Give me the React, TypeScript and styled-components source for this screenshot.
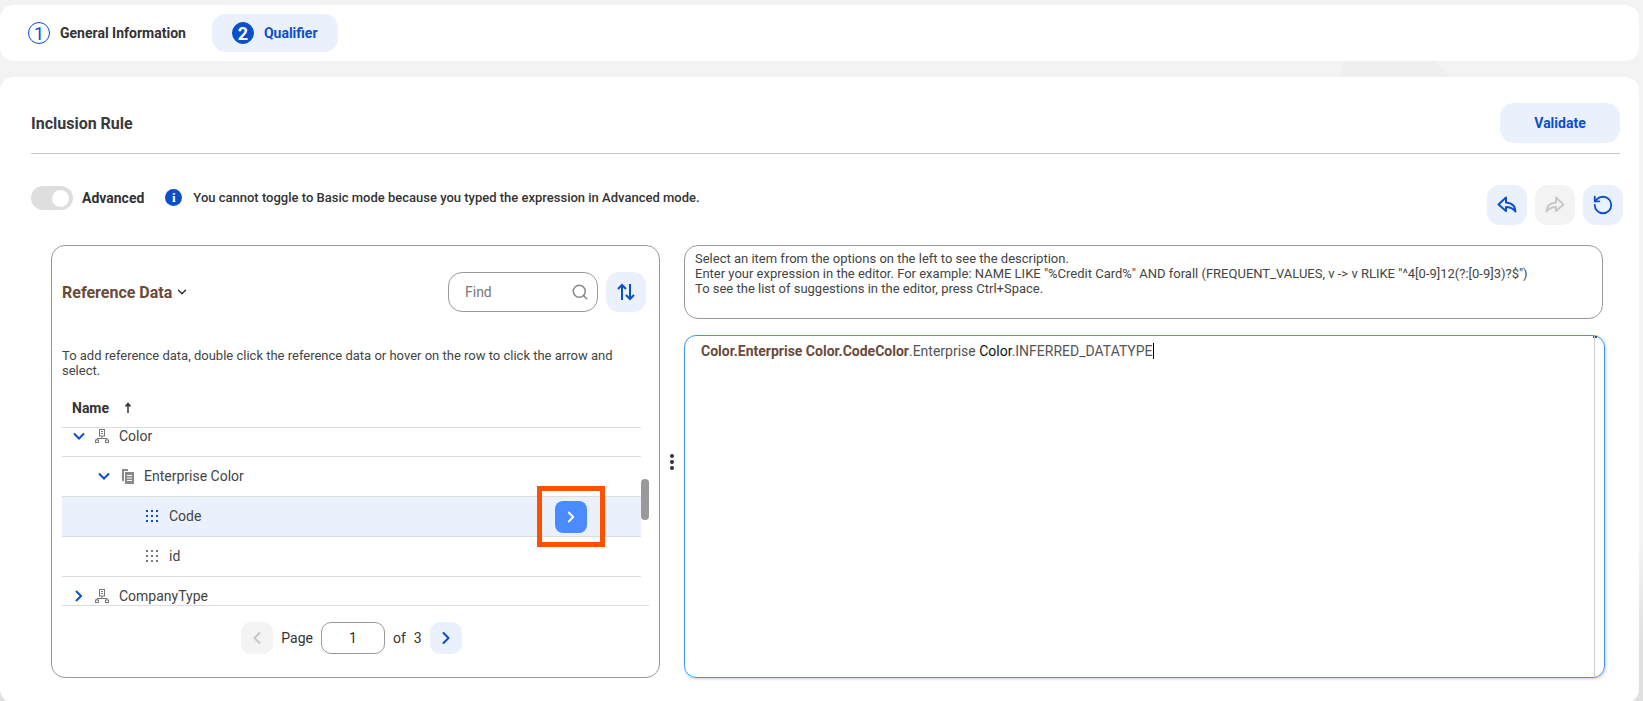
import styled, { createGlobalStyle } from 'styled-components';
import { ChevronDown, ChevronLeft, ChevronRight, RotateCcw, Search } from 'lucide-react';

const GlobalStyle = createGlobalStyle`
  html, body {
    margin: 0;
    height: 100%;
    overflow: hidden;
    background: #f3f3f3;
    font-family: Roboto, "Liberation Sans", sans-serif;
    color: #333;
  }
`;

const Page = styled.div`
  width: 1643px;
  height: 701px;
  padding: 5px 4px 0 0;
  box-sizing: border-box;
  display: flex;
  flex-direction: column;
  gap: 16px;
  position: relative;
  overflow: hidden;
  background: linear-gradient(#f3f3f3 78%, #e0e0e0 92%);

  &::before {
    content: '';
    position: absolute;
    left: 1340px;
    top: 50px;
    width: 112px;
    height: 30px;
    background: #efefef;
    clip-path: polygon(4% 0, 78% 0, 100% 100%, 0 100%);
  }
`;

const Stepper = styled.div`
  height: 56px;
  flex: none;
  display: flex;
  align-items: center;
  gap: 26px;
  padding-left: 28px;
  background: #fff;
  border-radius: 14px;
  position: relative;
`;

const Step = styled.div<{ $active?: boolean }>`
  height: 38px;
  display: flex;
  align-items: center;
  gap: 10px;
  padding: ${({ $active }) => ($active ? '0 20px' : '0')};
  border-radius: 14px;
  font-size: 14px;
  font-weight: 700;
  background: ${({ $active }) => ($active ? '#eaf1fd' : 'transparent')};
  color: ${({ $active }) => ($active ? '#0b4fc9' : '#333')};
`;

const StepNumber = styled.span<{ $active?: boolean }>`
  width: 22px;
  height: 22px;
  box-sizing: border-box;
  border-radius: 50%;
  display: flex;
  align-items: center;
  justify-content: center;
  font-size: 18px;
  font-weight: ${({ $active }) => ($active ? 700 : 400)};
  border: 1px solid #0b4fc9;
  color: ${({ $active }) => ($active ? '#fff' : '#0b4fc9')};
  background: ${({ $active }) => ($active ? '#0b4fc9' : '#fff')};
`;

const Main = styled.main`
  flex: none;
  height: 626px;
  background: #fff;
  border-radius: 14px;
  padding-left: 31px;
  display: flex;
  flex-direction: column;
  position: relative;
`;

const TitleRow = styled.div`
  height: 77px;
  width: 1589px;
  flex: none;
  box-sizing: border-box;
  padding-top: 26px;
  display: flex;
  justify-content: space-between;
  border-bottom: 1px solid #c8c8c8;
`;

const Title = styled.h2`
  margin: 0;
  font-size: 16px;
  line-height: 42px;
  font-weight: 700;
  color: #3a3a3a;
`;

const SoftButton = styled.button`
  width: 120px;
  height: 40px;
  border: 0;
  border-radius: 14px;
  background: #eaf1fd;
  color: #0b4fc9;
  font: 700 14px Roboto, sans-serif;
`;

const ToggleRow = styled.div`
  height: 91px;
  width: 1592px;
  flex: none;
  box-sizing: border-box;
  padding-top: 31px;
  display: flex;
  align-items: flex-start;
`;

const Toggle = styled.span`
  width: 42px;
  height: 24px;
  margin-top: 1px;
  border-radius: 12px;
  background: #dedede;
  display: flex;
  justify-content: flex-end;
  align-items: center;
  padding-right: 4px;
  box-sizing: border-box;

  &::after {
    content: '';
    width: 17px;
    height: 17px;
    border-radius: 50%;
    background: #fff;
  }
`;

const ToggleLabel = styled.span`
  margin: 1px 0 0 9px;
  font-size: 14px;
  line-height: 24px;
  font-weight: 700;
`;

const InfoDot = styled.span`
  width: 17px;
  height: 17px;
  margin: 4px 11px 0 21px;
  border-radius: 50%;
  background: #0b4fc9;
  color: #fff;
  font: 700 13px/17px "Liberation Serif", serif;
  text-align: center;
`;

const InfoText = styled.span`
  margin-top: 1px;
  font-size: 13px;
  line-height: 24px;
  font-weight: 500;
  flex: 1;
`;

const HistoryGroup = styled.div`
  display: flex;
  gap: 8px;
`;

const IconButton = styled.button<{ $disabled?: boolean; $size?: number }>`
  width: ${({ $size }) => $size ?? 40}px;
  height: ${({ $size }) => $size ?? 40}px;
  padding: 0;
  border: 0;
  flex: none;
  border-radius: ${({ $size }) => ($size ? 10 : 13)}px;
  display: flex;
  align-items: center;
  justify-content: center;
  background: ${({ $disabled }) => ($disabled ? '#f3f3f3' : '#eaf1fd')};
  color: ${({ $disabled }) => ($disabled ? '#c8c8c8' : '#0b4fc9')};
`;

const Workspace = styled.div`
  display: flex;
  align-items: flex-start;
  margin-left: 20px;
`;

const LeftPanel = styled.section`
  width: 609px;
  height: 433px;
  flex: none;
  box-sizing: border-box;
  border: 1px solid #999;
  border-radius: 14px;
  padding: 26px 0 0 10px;
  display: flex;
  flex-direction: column;
`;

const PanelHead = styled.div`
  display: flex;
  align-items: center;
  height: 40px;
  width: 584px;
  flex: none;
`;

const PanelTitle = styled.div`
  font-size: 16px;
  font-weight: 700;
  color: #6b4a3a;
  display: flex;
  align-items: center;
  gap: 3px;
  flex: 1;
`;

const FindBox = styled.div`
  width: 150px;
  height: 40px;
  box-sizing: border-box;
  margin-right: 8px;
  padding: 0 8px 0 16px;
  border: 1px solid #999;
  border-radius: 14px;
  display: flex;
  align-items: center;
  justify-content: space-between;
  font-size: 14px;
  color: #777;
`;

const Hint = styled.p`
  margin: 36px 20px 0 0;
  font-size: 13px;
  line-height: 15px;
  color: #444;
`;

const TableHead = styled.div`
  margin-top: 10px;
  width: 579px;
  height: 40px;
  flex: none;
  box-sizing: border-box;
  padding-left: 10px;
  display: flex;
  align-items: center;
  gap: 15px;
  font-size: 14px;
  font-weight: 700;
  border-bottom: 1px solid #ddd;
`;

const TreeBody = styled.div`
  width: 587px;
  height: 178px;
  flex: none;
  box-sizing: border-box;
  overflow: hidden;
  position: relative;
  border-bottom: 1px solid #ddd;
`;

const TreeRows = styled.div`
  margin-top: -11px;
  display: flex;
  flex-direction: column;
`;

const Row = styled.div<{ $indent: number; $selected?: boolean }>`
  width: 579px;
  flex: none;
  height: 40px;
  box-sizing: border-box;
  padding: 0 0 1px ${({ $indent }) => $indent}px;
  display: flex;
  align-items: center;
  gap: 10px;
  font-size: 14px;
  color: #444;
  border-bottom: 1px solid #ddd;
  background: ${({ $selected }) => ($selected ? '#eaf1fd' : 'transparent')};
  position: relative;
`;

const RowAction = styled.span`
  position: absolute;
  left: 493px;
  top: 4px;
  width: 32px;
  height: 32px;
  border-radius: 8px;
  background: #4a8cff;
  color: #fff;
  display: flex;
  align-items: center;
  justify-content: center;
`;

const Callout = styled.span`
  position: absolute;
  left: 475px;
  top: -11px;
  width: 68px;
  height: 61px;
  box-sizing: border-box;
  border: 5px solid #ff5000;
`;

const ScrollThumb = styled.span`
  position: absolute;
  right: 0;
  top: 51px;
  width: 8px;
  height: 41px;
  border-radius: 4px;
  background: #999;
`;

const Pager = styled.div`
  display: flex;
  align-items: center;
  justify-content: center;
  gap: 8px;
  margin-top: 16px;
  width: 579px;
  font-size: 14px;
  color: #333;
`;

const PageInput = styled.span`
  width: 64px;
  height: 32px;
  box-sizing: border-box;
  border: 1px solid #999;
  border-radius: 10px;
  display: flex;
  align-items: center;
  justify-content: center;
`;

const Divider = styled.div`
  width: 24px;
  flex: none;
  align-self: center;
  display: flex;
  flex-direction: column;
  align-items: center;
  gap: 2px;

  & > span {
    width: 4px;
    height: 4px;
    border-radius: 50%;
    background: #333;
  }
`;

const RightColumn = styled.div`
  width: 921px;
  flex: none;
  display: flex;
  flex-direction: column;
  gap: 16px;
`;

const Description = styled.div`
  width: 919px;
  height: 74px;
  box-sizing: border-box;
  border: 1px solid #999;
  border-radius: 14px;
  padding: 5px 10px;
  font-size: 13px;
  line-height: 15px;
  color: #444;
`;

const Editor = styled.div`
  height: 343px;
  box-sizing: border-box;
  border: 1.5px solid #3f95f0;
  border-radius: 12px;
  padding: 7px 16px;
  font-size: 14px;
  line-height: 16px;
  color: #555;
  position: relative;
  box-shadow: 1px 1px 3px rgba(0, 0, 0, 0.2);

  &::before {
    content: '';
    position: absolute;
    top: 0;
    right: 7px;
    width: 4px;
    height: 2px;
    background: #444;
  }

  &::after {
    content: '';
    position: absolute;
    top: 0;
    bottom: 0;
    right: 9px;
    border-right: 1px solid #d0d0d0;
  }
`;

const Token = styled.span`
  font-weight: 700;
  color: #6b4a3a;
`;

const Dark = styled.span`
  color: #111;
`;

const Caret = styled.span`
  display: inline-block;
  width: 1px;
  height: 16px;
  vertical-align: -3px;
  background: #000;
`;

const ReplyArrow = ({ flip }: { flip?: boolean }) => (
  <svg width="20" height="18" viewBox="0 0 20 18" fill="none" stroke="currentColor" strokeWidth="2" strokeLinejoin="round" style={flip ? { transform: 'scaleX(-1)' } : undefined}>
    <path d="M9 1.500 1.500 8.500 9 15v-4c3.500 0 6.500.8 9.500 4.500 0-5.500-4-8.500-9.500-9z" />
  </svg>
);

const TreeChevron = ({ open }: { open?: boolean }) => (
  <svg width="12" height="12" viewBox="0 0 12 12" fill="none" stroke="#0b4fc9" strokeWidth="2" strokeLinejoin="miter">
    <path d={open ? 'M1 3.500l5 5 5-5' : 'M3 1l5 5-5 5'} />
  </svg>
);

const EntityIcon = () => (
  <svg width="14" height="14" viewBox="0 0 14 14" fill="none" stroke="#777" strokeWidth="1">
    <rect x="4.500" y="0.500" width="5" height="6.500" />
    <path d="M6 2.500h2M6 4.500h2M7 7v2.500M2 11V9.500h10V11" />
    <rect x="0.500" y="11" width="3" height="2.500" />
    <rect x="10.500" y="11" width="3" height="2.500" />
  </svg>
);

const CopyIcon = () => (
  <svg width="14" height="15" viewBox="0 0 14 15">
    <path d="M2 0h6v2H4v10H2z" fill="#8a8a8a" />
    <path d="M5 3h9v12H5z" fill="#8a8a8a" />
    <path d="M7 6.500h5M7 9h5M7 11.500h5" stroke="#fff" strokeWidth="1" />
  </svg>
);

const GridDots = ({ fill }: { fill: string }) => (
  <svg width="13" height="12" viewBox="0 0 13 12" fill={fill}>
    {[0, 5, 10].map((y) =>
      [0, 5, 10].map((x) => <rect key={`${x}-${y}`} x={x} y={y} width="2" height="2" />),
    )}
  </svg>
);

const SwapIcon = () => (
  <svg width="18" height="18" viewBox="0 0 18 18" fill="none" stroke="currentColor" strokeWidth="2">
    <path d="M5 17V2M1 6l4-4 4 4M13 1v15M9 12l4 4 4-4" />
  </svg>
);

const SortArrow = () => (
  <svg width="8" height="11" viewBox="0 0 8 11" fill="none" stroke="#333" strokeWidth="1.500">
    <path d="M4 11V1.500M1.500 4.500 4 1.500l2.500 3" />
  </svg>
);

export default function App() {
  return (
    <Page>
      <GlobalStyle />
      <Stepper>
        <Step>
          <StepNumber>1</StepNumber>
          General Information
        </Step>
        <Step $active>
          <StepNumber $active>2</StepNumber>
          Qualifier
        </Step>
      </Stepper>
      <Main>
        <TitleRow>
          <Title>Inclusion Rule</Title>
          <SoftButton>Validate</SoftButton>
        </TitleRow>
        <ToggleRow>
          <Toggle />
          <ToggleLabel>Advanced</ToggleLabel>
          <InfoDot>i</InfoDot>
          <InfoText>You cannot toggle to Basic mode because you typed the expression in Advanced mode.</InfoText>
          <HistoryGroup>
            <IconButton>
              <ReplyArrow />
            </IconButton>
            <IconButton $disabled>
              <ReplyArrow flip />
            </IconButton>
            <IconButton>
              <RotateCcw size={22} strokeWidth={2} />
            </IconButton>
          </HistoryGroup>
        </ToggleRow>
        <Workspace>
          <LeftPanel>
            <PanelHead>
              <PanelTitle>
                Reference Data <ChevronDown size={14} strokeWidth={2.5} color="#333" />
              </PanelTitle>
              <FindBox>
                Find <Search size={18} color="#888" />
              </FindBox>
              <IconButton>
                <SwapIcon />
              </IconButton>
            </PanelHead>
            <Hint>To add reference data, double click the reference data or hover on the row to click the arrow and select.</Hint>
            <TableHead>
              Name <SortArrow />
            </TableHead>
            <TreeBody>
              <TreeRows>
                <Row $indent={11}>
                  <TreeChevron open />
                  <EntityIcon />
                  Color
                </Row>
                <Row $indent={36}>
                  <TreeChevron open />
                  <CopyIcon />
                  Enterprise Color
                </Row>
                <Row $indent={84} $selected>
                  <GridDots fill="#0b4fc9" />
                  Code
                  <RowAction>
                    <ChevronRight size={18} strokeWidth={2.5} />
                  </RowAction>
                  <Callout />
                </Row>
                <Row $indent={84}>
                  <GridDots fill="#777" />
                  id
                </Row>
                <Row $indent={11}>
                  <TreeChevron />
                  <EntityIcon />
                  CompanyType
                </Row>
              </TreeRows>
              <ScrollThumb />
            </TreeBody>
            <Pager>
              <IconButton $disabled $size={32}>
                <ChevronLeft size={20} strokeWidth={2.5} />
              </IconButton>
              <span>Page</span>
              <PageInput>1</PageInput>
              <span>of</span>
              <span>3</span>
              <IconButton $size={32}>
                <ChevronRight size={20} strokeWidth={2.5} />
              </IconButton>
            </Pager>
          </LeftPanel>
          <Divider>
            <span />
            <span />
            <span />
          </Divider>
          <RightColumn>
            <Description>
              Select an item from the options on the left to see the description.
              <br />
              Enter your expression in the editor. For example: NAME LIKE "%Credit Card%" AND forall (FREQUENT_VALUES, v -&gt; v RLIKE "^4[0-9]12(?:[0-9]3)?$")
              <br />
              To see the list of suggestions in the editor, press Ctrl+Space.
            </Description>
            <Editor>
              <Token>Color.Enterprise Color.CodeColor</Token>.Enterprise <Dark>Color</Dark>.INFERRED_DATATYPE
              <Caret />
            </Editor>
          </RightColumn>
        </Workspace>
      </Main>
    </Page>
  );
}
